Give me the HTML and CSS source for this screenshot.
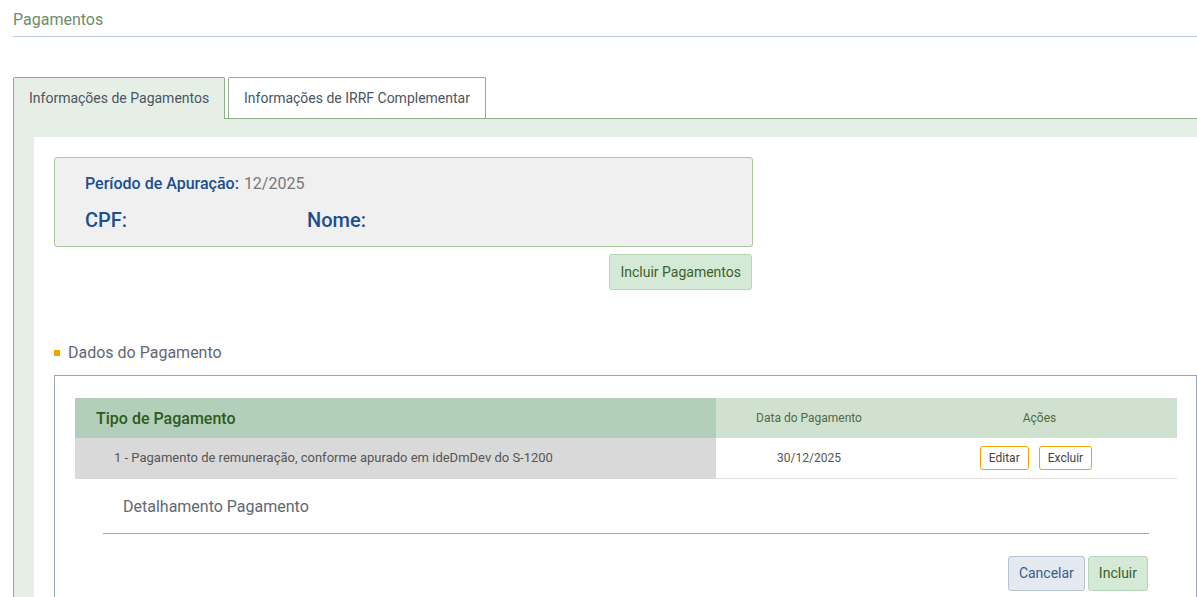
FILE: index.html
```html
<!DOCTYPE html>
<html lang="pt-BR">
<head>
<meta charset="utf-8">
<title>Pagamentos</title>
<link rel="stylesheet" href="styles.css">
</head>
<body>
<div class="page">
  <h1 class="page-title">Pagamentos</h1>

  <ul class="tabs">
    <li class="tab active">Informações de Pagamentos</li>
    <li class="tab">Informações de IRRF Complementar</li>
  </ul>

  <div class="tab-panel">
    <div class="panel-inner">
      <div class="info-box">
        <div class="info-line">
          <span class="info-label">Período de Apuração:</span>
          <span class="info-value">12/2025</span>
        </div>
        <div class="info-line big">
          <span class="info-cpf">CPF:</span>
          <span class="info-nome">Nome:</span>
        </div>
      </div>
      <div class="info-actions">
        <button class="btn btn-green">Incluir Pagamentos</button>
      </div>

      <h2 class="section-title"><span class="bullet"></span>Dados do Pagamento</h2>

      <div class="fieldset">
        <table class="grid">
          <thead>
            <tr>
              <th class="col-tipo">Tipo de Pagamento</th>
              <th class="col-data">Data do Pagamento</th>
              <th class="col-acoes">Ações</th>
            </tr>
          </thead>
          <tbody>
            <tr>
              <td class="cell-tipo">1 - Pagamento de remuneração, conforme apurado em ideDmDev do S-1200</td>
              <td class="cell-data">30/12/2025</td>
              <td class="cell-acoes">
                <div class="actions">
                  <button class="btn-outline">Editar</button>
                  <button class="btn-outline">Excluir</button>
                </div>
              </td>
            </tr>
          </tbody>
        </table>

        <div class="detail">
          <h3 class="detail-title">Detalhamento Pagamento</h3>
          <div class="detail-actions">
            <button class="btn btn-blue">Cancelar</button>
            <button class="btn btn-green">Incluir</button>
          </div>
        </div>
      </div>
    </div>
  </div>
</div>
</body>
</html>
```

FILE: styles.css
```css
* { box-sizing: border-box; }

html, body {
  margin: 0;
  padding: 0;
  background: #ffffff;
  font-family: Roboto, "Liberation Sans", Arial, sans-serif;
  overflow: hidden;
}

.page {
  padding-left: 13px;
}

.page-title {
  margin: 0;
  padding-top: 10px;
  padding-bottom: 6px;
  font-size: 16px;
  line-height: 20px;
  font-weight: 400;
  color: #6e8c6c;
  border-bottom: 1px solid #b9c5d8;
}

.tabs {
  list-style: none;
  margin: 40px 0 0 0;
  padding: 0;
  display: flex;
  gap: 3px;
  border-bottom: 1px solid #8fb087;
  height: 42px;
}

.tab {
  padding: 0 15px;
  display: flex;
  align-items: center;
  white-space: nowrap;
  font-size: 14px;
  color: #4b5561;
  background: #ffffff;
  border: 1px solid #8fb087;
  border-bottom: none;
  border-radius: 2px 2px 0 0;
  margin-bottom: -1px;
  height: 41px;
}

.tab.active {
  width: 212px;
  background: #e5efe6;
  height: 42px;
  padding-bottom: 1px;
}

.tab:not(.active) {
  width: 258px;
}

.tab-panel {
  background: #e5efe6;
  border-left: 1px solid #8fb087;
  padding: 18px 0 0 20px;
}

.panel-inner {
  background: #ffffff;
  padding: 20px 0 8px 20px;
  height: 460px;
}

.info-box {
  width: 699px;
  height: 90px;
  background: #f0f0f0;
  border: 1px solid #a9c89e;
  border-radius: 3px;
  padding: 16px 30px 0 30px;
}

.info-line {
  display: flex;
  align-items: baseline;
  font-size: 16px;
  line-height: 19px;
}

.info-label {
  color: #1b4f8e;
  font-weight: 500;
  margin-right: 5px;
}

.info-value {
  color: #777777;
}

.info-line.big {
  margin-top: 16px;
  font-size: 20px;
  line-height: 22px;
  font-weight: 500;
  color: #1b4f8e;
}

.info-cpf {
  width: 222px;
}

.info-actions {
  width: 698px;
  display: flex;
  justify-content: flex-end;
  margin-top: 7px;
}

.btn {
  font-family: inherit;
  font-size: 14px;
  height: 36px;
  padding: 0 10px;
  border-radius: 3px;
  cursor: pointer;
}

.btn-green {
  background: #d4e9d6;
  border: 1px solid #b6d6b8;
  color: #3d5f2c;
}

.btn-blue {
  background: #e4e8ef;
  border: 1px solid #b6c3d3;
  color: #3a5d8d;
}

.section-title {
  margin: 53px 0 0 0;
  display: flex;
  align-items: center;
  font-size: 16px;
  line-height: 20px;
  font-weight: 400;
  color: #5e6873;
}

.bullet {
  display: inline-block;
  width: 6px;
  height: 6px;
  background: #f5a300;
  margin-right: 8px;
}

.fieldset {
  margin-top: 12px;
  border: 1px solid #9aa9b5;
  padding: 22px 19px 20px 20px;
}

.grid {
  width: 100%;
  border-collapse: collapse;
}

.grid th {
  height: 40px;
  font-weight: 400;
  background: #d0e2cf;
  color: #4e6a45;
  font-size: 12px;
}

.grid th.col-tipo {
  width: 641px;
  background: #b2d0b9;
  color: #2d5a20;
  font-size: 16px;
  font-weight: 500;
  text-align: left;
  padding-left: 21px;
}

.grid th.col-data {
  width: 186px;
}

.grid td {
  height: 40px;
  font-size: 12px;
  color: #555555;
  border-bottom: 1px solid #dedede;
  text-align: center;
}

.grid td.cell-tipo {
  background: #d9d9d9;
  text-align: left;
  padding-left: 39px;
  font-size: 13px;
  color: #555555;
  border-bottom-color: #d9d9d9;
}

.actions {
  display: flex;
  justify-content: center;
  gap: 10px;
  padding-right: 7px;
}

.btn-outline {
  font-family: inherit;
  font-size: 12px;
  color: #444444;
  background: #ffffff;
  border: 1px solid #f0a500;
  border-radius: 3px;
  height: 24px;
  padding: 0 8px;
}

.detail {
  margin: 0 28px;
}

.detail-title {
  margin: 0;
  padding: 18px 0 0 20px;
  height: 55px;
  font-size: 16px;
  line-height: 20px;
  font-weight: 400;
  color: #5f6872;
  border-bottom: 1px solid #9aa9b5;
}

.detail-actions {
  display: flex;
  justify-content: flex-end;
  gap: 3px;
  margin-top: 22px;
  margin-right: 1px;
}

.detail-actions .btn {
  height: 35px;
}
```
